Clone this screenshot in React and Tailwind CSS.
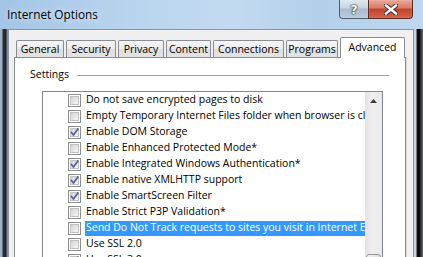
import React from "react";

const FONT = { fontFamily: '"Open Sans", "Noto Sans", sans-serif' };

function Checkbox({ checked }) {
  return (
    <div className="w-[13px] h-[13px] shrink-0 border border-[#8e8f8f] bg-white p-[1px]">
      <div className="relative w-full h-full border border-[#c2c2c2] bg-[linear-gradient(135deg,#d3d3d3,#f4f4f4)]">
        {checked && (
          <svg className="absolute left-[-1px] top-[-1px]" width="9" height="9" viewBox="0 0 9 9">
            <path d="M1.5 4.5 L3.5 7 L7.8 1.2" fill="none" stroke="#4b5f9c" strokeWidth="1.6" strokeLinecap="square" />
          </svg>
        )}
      </div>
    </div>
  );
}

const items = [
  ["Do not save encrypted pages to disk", false],
  ["Empty Temporary Internet Files folder when browser is closed", false],
  ["Enable DOM Storage", true],
  ["Enable Enhanced Protected Mode*", false],
  ["Enable Integrated Windows Authentication*", true],
  ["Enable native XMLHTTP support", true],
  ["Enable SmartScreen Filter", true],
  ["Enable Strict P3P Validation*", false],
  ["Send Do Not Track requests to sites you visit in Internet Explorer", false, true],
  ["Use SSL 2.0", false],
  ["Use SSL 3.0", true],
];

const tabs = [
  ["General", "w-[48px]"],
  ["Security", "w-[50px]"],
  ["Privacy", "w-[46px]"],
  ["Content", "w-[45px]"],
  ["Connections", "w-[71px]"],
  ["Programs", "w-[52px]"],
];

export default function App() {
  return (
    <div
      className="w-[423px] h-[257px] overflow-hidden flex flex-col bg-[#1d2126] text-black"
      style={FONT}
    >
      {/* Title bar */}
      <div className="h-[29px] shrink-0 flex justify-between bg-[linear-gradient(to_right,#a3c5e6_0%,#b8d4ee_30%,#c3dbf0_55%,#b3cfea_75%,#bfd8ef_100%)]">
        <div className="pl-[7px] flex items-center text-[11.8px] leading-none [text-shadow:0_0_6px_rgba(255,255,255,0.9)]">
          Internet Options
        </div>
        <div className="flex mr-[10px] h-[19px]">
          <div className="w-[29px] h-[19px] flex items-center justify-center rounded-bl-[4px] border border-t-0 border-r-0 border-[#4d5d70] bg-[linear-gradient(to_bottom,#dfe8f1_0%,#c6d4e3_45%,#a8bbcf_50%,#bccbdb_100%)] shadow-[inset_0_0_1px_rgba(255,255,255,0.8)]">
            <span className="text-white font-bold text-[13px] leading-none [text-shadow:0_0_1px_#222,0_0_1px_#222,0_0_2px_#444]" style={{ fontFamily: '"DejaVu Sans", sans-serif' }}>?</span>
          </div>
          <div className="w-[45px] h-[19px] flex items-center justify-center rounded-br-[4px] border border-t-0 border-[#5a2a22] bg-[linear-gradient(to_bottom,#e9a99a_0%,#d97a65_45%,#c2422c_50%,#d2654d_100%)] shadow-[inset_0_0_1px_rgba(255,255,255,0.7)]">
            <svg width="14" height="11" viewBox="0 0 14 11">
              <path d="M2 1.5 L12 9.5 M12 1.5 L2 9.5" stroke="#3a2a28" strokeWidth="4.2" strokeLinecap="square" />
              <path d="M2 1.5 L12 9.5 M12 1.5 L2 9.5" stroke="#ffffff" strokeWidth="2.4" strokeLinecap="square" />
            </svg>
          </div>
        </div>
      </div>

      {/* Body row */}
      <div className="flex flex-1 min-h-0">
        <div className="w-[8px] shrink-0 bg-[linear-gradient(to_right,#9fb3c8_0px,#9fb3c8_2px,#2b3036_3px,#20242a_6px,#7d8692_7px,#8d9aa8_8px)]" />
        <div className="w-[406px] shrink-0 flex flex-col bg-[#f0f0f0] border-t border-l border-r border-[#8a96a4] pt-[7px] pl-[5px]">
          {/* Tabs */}
          <div className="flex items-end gap-[2px] ml-[2px] h-[21px] -mb-px relative z-10 text-[10.5px] leading-none">
            {tabs.map(([t, w]) => (
              <div
                key={t}
                className={`${w} h-[17px] mb-px flex items-center justify-center border border-b-0 border-[#898c95] rounded-t-[2px] bg-[linear-gradient(to_bottom,#f6f6f6_0%,#ebebeb_50%,#dedede_51%,#e4e4e4_100%)]`}
              >
                {t}
              </div>
            ))}
            <div className="w-[65px] h-[21px] flex items-center justify-center pb-[2px] border border-b-0 border-[#898c95] rounded-t-[2px] bg-white">
              Advanced
            </div>
          </div>
          {/* Panel */}
          <div className="w-[392px] flex-1 flex flex-col border border-[#898c95] bg-white shadow-[1px_0_0_#d8d8d8]">
            <div className="h-[16px] mt-[9px] pl-[15px] flex items-center text-[10.5px]">
              <span>Settings</span>
              <div className="flex-1 h-px ml-[8px] mr-[16px] bg-[#a0a0a0]" />
            </div>
            <div className="ml-[27px] mt-[8px] w-[341px] h-[200px] border border-[#828790] flex">
              <div className="flex-1 min-w-0 flex flex-col text-[10.5px]">
                {items.map(([t, c, sel]) => (
                  <div key={t} className="h-[16px] shrink-0 flex items-center pl-[25px]">
                    <Checkbox checked={c} />
                    <div
                      className={`ml-[4px] flex-1 min-w-0 h-[15px] flex items-center pl-[1px] whitespace-nowrap overflow-hidden ${sel ? "bg-[#3399ff] text-white" : ""}`}
                    >
                      {t}
                    </div>
                  </div>
                ))}
              </div>
              <div className="w-[17px] shrink-0 flex flex-col bg-[linear-gradient(to_right,#e3e3e3,#efefef_40%,#e9e9e9)]">
                <div className="h-[17px] flex items-center justify-center">
                  <svg width="7" height="4" viewBox="0 0 7 4">
                    <path d="M0 4 L3.5 0 L7 4 Z" fill="#3c3c3c" />
                  </svg>
                </div>
                <div className="mt-[145px] mx-[1px] h-[30px] rounded-[3px] border border-[#979797] bg-[linear-gradient(to_right,#f2f2f2,#e0e0e0)]" />
              </div>
            </div>
          </div>
        </div>
        <div className="w-[9px] shrink-0 bg-[linear-gradient(to_right,#c8d4e0_0px,#c8d4e0_2px,#1a1a1a_3px,#000_5px,#3a3a3a_7px,#6a6a6a_9px)]" />
      </div>
    </div>
  );
}
